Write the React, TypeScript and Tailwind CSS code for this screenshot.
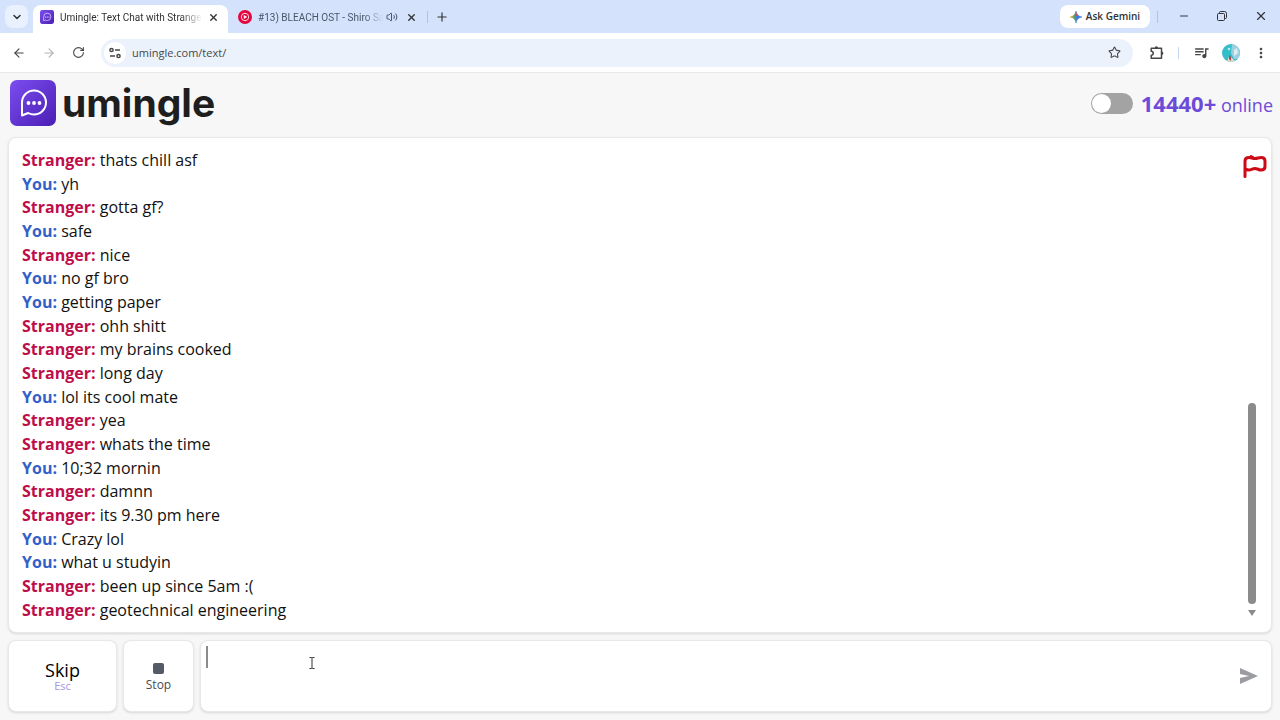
import React from "react";
import { ArrowLeft, ArrowRight, ChevronDown, Minus, Plus, RotateCw, Star, Volume2, X } from "lucide-react";
import { MdQueueMusic, MdMoreVert } from "react-icons/md";

const messages = [
  { from: "Stranger", text: "thats chill asf" },
  { from: "You", text: "yh" },
  { from: "Stranger", text: "gotta gf?" },
  { from: "You", text: "safe" },
  { from: "Stranger", text: "nice" },
  { from: "You", text: "no gf bro" },
  { from: "You", text: "getting paper" },
  { from: "Stranger", text: "ohh shitt" },
  { from: "Stranger", text: "my brains cooked" },
  { from: "Stranger", text: "long day" },
  { from: "You", text: "lol its cool mate" },
  { from: "Stranger", text: "yea" },
  { from: "Stranger", text: "whats the time" },
  { from: "You", text: "10;32 mornin" },
  { from: "Stranger", text: "damnn" },
  { from: "Stranger", text: "its 9.30 pm here" },
  { from: "You", text: "Crazy lol" },
  { from: "You", text: "what u studyin" },
  { from: "Stranger", text: "been up since 5am :(" },
  { from: "Stranger", text: "geotechnical engineering" },
];

function Logo({ className }: { className: string }) {
  return (
    <svg viewBox="0 0 46 46" className={className} aria-hidden="true">
      <defs>
        <linearGradient id="logoFill" x1="0" y1="0" x2="1" y2="1">
          <stop offset="0" stopColor="#7c4df0" />
          <stop offset="1" stopColor="#4a1fb4" />
        </linearGradient>
      </defs>
      <rect width="46" height="46" rx="7" fill="url(#logoFill)" />
      <path
        d="M12 35.500V22.500a12 12 0 1 1 12 12c-2.400 0-4-.5-5.800-1.500Z"
        fill="none"
        stroke="#fff"
        strokeWidth="2"
        strokeLinejoin="round"
      />
      <circle cx="18.500" cy="23" r="1.900" fill="#fff" />
      <circle cx="24" cy="23" r="1.900" fill="#fff" />
      <circle cx="29.500" cy="23" r="1.900" fill="#fff" />
    </svg>
  );
}

function TabStrip() {
  return (
    <div className="flex h-[33px] shrink-0 items-end bg-[#d4e3fb] pl-[5px] text-[11px] text-[#303134]">
      <button aria-label="Search tabs" className="mb-[5px] flex h-[23px] w-[23px] items-center justify-center rounded-lg bg-[#e9f1fe]">
        <ChevronDown size={12} strokeWidth={3} />
      </button>
      <div className="ml-[5px] flex h-[28px] w-[195px] items-center rounded-t-lg bg-white pb-1 pl-[7px]">
        <Logo className="h-[14px] w-[14px] shrink-0" />
        <span className="ml-[6px] w-[142px] overflow-hidden whitespace-nowrap font-[Roboto] text-[10px] [mask-image:linear-gradient(to_right,#000_85%,transparent)]">
          Umingle: Text Chat with Strange
        </span>
        <button aria-label="Close tab" className="ml-[6px]">
          <X size={11} strokeWidth={3} />
        </button>
      </div>
      <div className="ml-[10px] flex h-[28px] items-center pb-1 text-[#4a5568]">
        <svg viewBox="0 0 14 14" className="h-[14px] w-[14px]">
          <circle cx="7" cy="7" r="7" fill="#e3063f" />
          <circle cx="7" cy="7" r="3.700" fill="none" stroke="#fff" strokeWidth="0.800" />
          <path d="M5.800 4.900v4.200L9.200 7Z" fill="#fff" />
        </svg>
        <span className="ml-[6px] w-[125px] overflow-hidden whitespace-nowrap font-[Roboto] text-[10px] [mask-image:linear-gradient(to_right,#000_85%,transparent)]">
          #13) BLEACH OST - Shiro Sa
        </span>
        <Volume2 size={12} strokeWidth={2} className="ml-[3px]" />
        <button aria-label="Close tab" className="ml-2 text-[#303134]">
          <X size={11} strokeWidth={3} />
        </button>
        <span className="ml-[10px] h-3 w-px bg-[#a9c3f3]" />
        <button aria-label="New tab" className="ml-[7px] text-[#303134]">
          <Plus size={14} strokeWidth={2} />
        </button>
      </div>
      <button className="mb-[5px] ml-auto flex h-[23px] w-[90px] items-center justify-center gap-1 rounded-lg bg-white text-[10px] font-semibold">
        <svg viewBox="0 0 12 12" className="h-3 w-3">
          <defs>
            <linearGradient id="gemini" x1="0" y1="0" x2="1" y2="0">
              <stop offset="0" stopColor="#e5aa28" />
              <stop offset="0.400" stopColor="#4f9c80" />
              <stop offset="0.600" stopColor="#3b78e7" />
              <stop offset="1" stopColor="#3b78e7" />
            </linearGradient>
          </defs>
          <path d="M6 0Q6.800 5.200 12 6 6.800 6.800 6 12 5.200 6.800 0 6 5.200 5.200 6 0Z" fill="url(#gemini)" stroke="url(#gemini)" strokeWidth="0.500" />
          <path d="M6 0Q6.400 3 7.500 4.500L6 5 4.500 4.500Q5.600 3 6 0Z" fill="#d95040" />
        </svg>
        Ask Gemini
      </button>
      <span className="mb-[10px] ml-[7px] h-3 w-px bg-[#a9c3f3]" />
      <div className="mb-[10px] ml-5 mr-3 flex items-center gap-[26px]">
        <button aria-label="Minimize">
          <Minus size={12} strokeWidth={2} />
        </button>
        <button aria-label="Restore">
          <svg viewBox="0 0 12 12" className="h-3 w-3" fill="none" stroke="currentColor">
            <rect x="1.500" y="3.500" width="7" height="7" rx="1" />
            <path d="M3.500 3.500v-1a1 1 0 0 1 1-1h4a2 2 0 0 1 2 2v4a1 1 0 0 1-1 1h-1" />
          </svg>
        </button>
        <button aria-label="Close">
          <X size={14} strokeWidth={2} />
        </button>
      </div>
    </div>
  );
}

function Toolbar() {
  return (
    <div className="flex h-10 shrink-0 items-center border-b border-[#e6e8ea] bg-white pl-3 text-[#45474a]">
      <div className="flex items-center gap-4">
        <button aria-label="Back">
          <ArrowLeft size={14} strokeWidth={2} />
        </button>
        <button aria-label="Forward" className="text-[#b0b2b5]">
          <ArrowRight size={14} strokeWidth={2} />
        </button>
        <button aria-label="Reload">
          <RotateCw size={13} strokeWidth={2} />
        </button>
      </div>
      <div className="ml-4 flex h-7 flex-1 items-center rounded-full bg-[#ecf2fb] px-[3px]">
        <button aria-label="Site information" className="flex h-[22px] w-[22px] items-center justify-center rounded-full bg-white">
          <svg viewBox="0 0 12 12" className="h-3 w-3" fill="none" stroke="currentColor" strokeWidth="1.500">
            <circle cx="2.500" cy="3" r="1.600" />
            <path d="M6 3h5M1 9h5" />
            <circle cx="9.500" cy="9" r="1.600" />
          </svg>
        </button>
        <input
          aria-label="Address"
          defaultValue="umingle.com/text/"
          className="ml-[6px] min-w-0 flex-1 bg-transparent pt-px text-[11px] outline-none"
        />
        <button aria-label="Bookmark" className="mr-[9px]">
          <Star size={13} strokeWidth={2} />
        </button>
      </div>
      <button aria-label="Extensions" className="ml-4">
        <svg viewBox="0 0 16 16" className="h-4 w-4" fill="none" stroke="currentColor" strokeWidth="1.500" strokeLinejoin="round">
          <path d="M2.200 3.200H12.500V13.200H2.200V10.300a2 2 0 0 0 0-4Z" />
          <path d="M5.700 3a1.700 1.700 0 0 1 3.400 0ZM12.700 6.600a1.700 1.700 0 0 1 0 3.400Z" fill="currentColor" stroke="none" />
        </svg>
      </button>
      <span className="ml-[13px] h-3 w-px bg-[#c7d7f2]" />
      <button aria-label="Media" className="ml-[14px]">
        <MdQueueMusic size={17} />
      </button>
      <button aria-label="Profile" className="ml-[12px]">
        <svg viewBox="0 0 18 18" className="h-[18px] w-[18px]">
          <clipPath id="avatar">
            <circle cx="9" cy="9" r="9" />
          </clipPath>
          <g clipPath="url(#avatar)">
            <rect width="18" height="18" fill="#35bdc9" />
            <path d="M10 0h8v15h-6L9 9Z" fill="#9ecfe0" />
            <path d="M12 6l3-2 1 5-4 3Z" fill="#dceef2" />
            <path d="M5 18l2-6 3 2 4 4Z" fill="#e9d5cd" />
            <path d="M7 11l2 2 0 4-2-2Z" fill="#a04f45" />
            <circle cx="7" cy="5" r="1.300" fill="#b5f2f0" />
          </g>
        </svg>
      </button>
      <button aria-label="Menu" className="ml-[13px] mr-[11px]">
        <MdMoreVert size={16} />
      </button>
    </div>
  );
}

function Header() {
  return (
    <header className="flex h-16 shrink-0 items-center justify-between pb-1 pl-[10px] pr-[7px]">
      <a href="#" className="flex items-center">
        <Logo className="h-[46px] w-[46px]" />
        <span className="ml-[6px] font-[Inter] text-[39px] font-bold leading-[46px] text-[#1e1e1e]">umingle</span>
      </a>
      <div className="flex items-center">
        <label className="relative flex">
          <input type="checkbox" role="switch" aria-label="Dark mode" className="peer h-[21px] w-[42px] appearance-none rounded-full bg-[#a3a3a3]" />
          <span className="absolute left-px top-px h-[19px] w-[19px] rounded-full bg-white peer-checked:left-[22px]" />
        </label>
        <p className="ml-2 pt-px text-[18px] leading-[24px] text-[#6c4bd8]">
          <span className="text-[22px] font-bold">14440+</span> online
        </p>
      </div>
    </header>
  );
}

function Chat() {
  return (
    <main className="mx-2 flex min-h-0 flex-1 justify-between rounded-lg border border-[#e8e8ea] bg-white shadow-sm">
      <ul className="flex flex-col justify-between pb-[10px] pl-[13px] pt-[11px] text-[16px] leading-[23px] text-[#111]">
        {messages.map((message, index) => (
          <li key={index}>
            <b className={message.from === "You" ? "text-[#3360c9]" : "text-[#bd0e49]"}>{message.from}:</b> {message.text}
          </li>
        ))}
      </ul>
      <div className="mr-1 flex w-6 flex-col py-4">
        <button aria-label="Report" className="text-[#cf0a17]">
          <svg viewBox="0 0 24 24" className="h-6 w-6" fill="none" stroke="currentColor" strokeWidth="3" strokeLinecap="round" strokeLinejoin="round">
            <path d="M2 22.500V7C2 4.500 3.500 3.500 6 3.500c2.500 0 3.500 1 6 1s3.500-1 6-1 4 1 4 3.500v5.500c0 2.500-1.500 3.500-4 3.500s-3.500-1.500-6-1.500-4 1.500-6 1.500-3-.8-4-.8M8 2.500l2 1" />
          </svg>
        </button>
        <div className="flex flex-1 flex-col justify-end pl-[5px]">
          <div className="h-[46%] w-2 rounded-full bg-[#8b8b8b]" />
          <svg viewBox="0 0 8 6" className="mt-[6px] h-[6px] w-2" fill="#8b8b8b">
            <path d="M0 0h8L4 6Z" />
          </svg>
        </div>
      </div>
    </main>
  );
}

function Composer() {
  return (
    <form className="mx-2 mb-2 mt-[7px] flex h-[72px] shrink-0 gap-[6px]">
      <button type="button" className="flex w-[109px] flex-col items-center justify-center rounded-lg border border-[#e8e8ea] bg-white shadow-sm">
        <span className="text-[18px] leading-[20px] text-black">Skip</span>
        <span className="text-[11px] font-medium leading-[12px] text-[#a394e3]">Esc</span>
      </button>
      <button type="button" className="flex w-[71px] flex-col items-center justify-center gap-[3px] rounded-lg border border-[#e8e8ea] bg-white pt-1 shadow-sm">
        <span className="h-[11px] w-[11px] rounded-xs bg-[#555b66]" />
        <span className="text-[12px] font-medium leading-[16px] text-[#4c4c50]">Stop</span>
      </button>
      <div className="relative flex flex-1 items-center rounded-lg border border-[#e8e8ea] bg-white shadow-sm">
        <textarea aria-label="Message" className="h-full flex-1 resize-none bg-transparent px-[5px] py-1 text-[16px] outline-none" />
        <span className="absolute left-[5px] top-[5px] h-[22px] w-[2px] bg-[#8c8c8c]" />
        <svg viewBox="0 0 8 12" className="absolute left-[107px] top-4 h-3 w-2" fill="none" stroke="#333">
          <path d="M1.500 .5H3.500L4 1l.5-.5h2M4 1v10M1.500 11.500h2L4 11l.5.5h2" />
        </svg>
        <button type="button" aria-label="Send" className="mr-[13px]">
          <svg viewBox="0 0 18 16" className="h-4 w-[18px]" fill="#9a9ca1">
            <path d="M0 0 18 8 0 16V10L9 8 0 6Z" />
          </svg>
        </button>
      </div>
    </form>
  );
}

function App() {
  return (
    <div className="flex h-screen min-h-[640px] flex-col overflow-hidden bg-[#f7f7f7] font-['Open_Sans','Noto_Sans',sans-serif]">
      <TabStrip />
      <Toolbar />
      <Header />
      <Chat />
      <Composer />
    </div>
  );
}

export default App;
